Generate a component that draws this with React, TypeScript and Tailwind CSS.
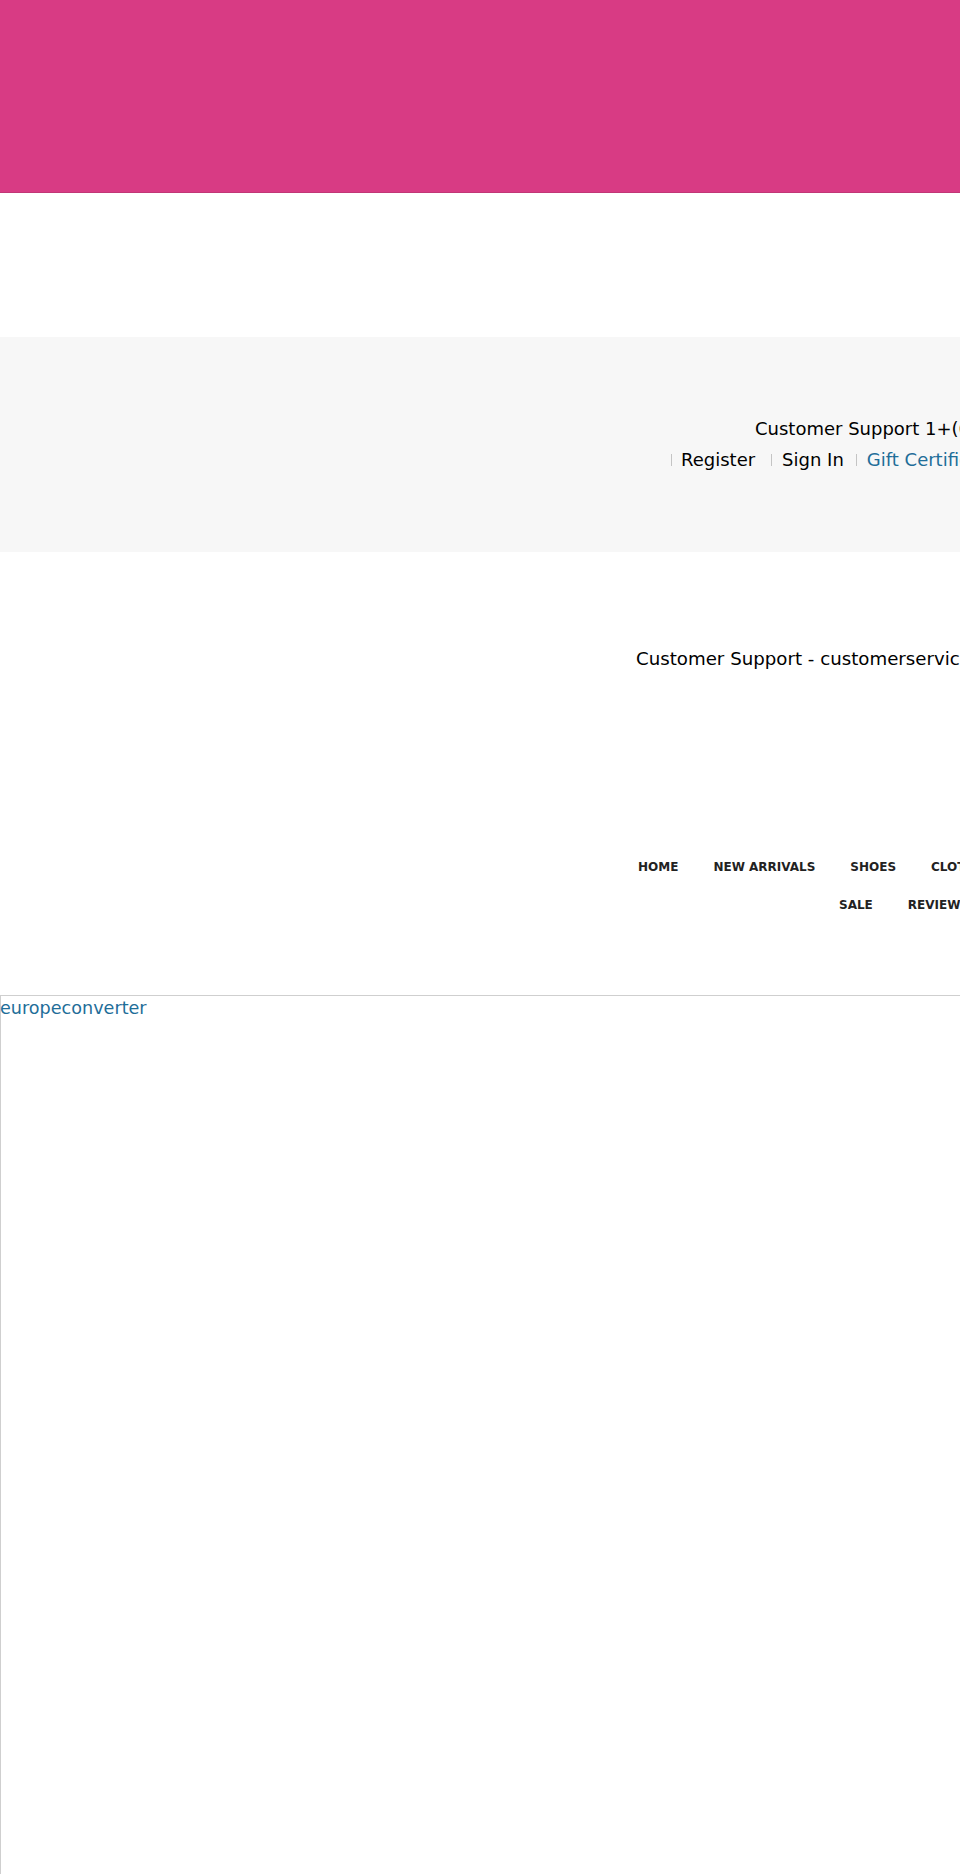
const navTop = ['HOME', 'NEW ARRIVALS', 'SHOES', 'CLOTHING', 'ACCESSORIES'];
const navBottom = ['SALE', 'REVIEWS'];

const Sep = () => <span className="block shrink-0 w-px h-[12px] bg-[#c4c4c4]" />;

export default function App() {
  return (
    <div className="w-[960px] min-h-[1875px] overflow-hidden bg-white text-black font-['DejaVu_Sans',Verdana,sans-serif]">
      <div className="h-[193px] bg-[#d83b84] border-b border-[#c13676]" />
      <div className="h-[144px]" />

      <div className="h-[215px] bg-[#f7f7f7] pt-[76px] whitespace-nowrap">
        <div className="pl-[755px] text-[18px] leading-[31px]">Customer Support 1+(646) 555-0199</div>
        <div className="pl-[671px] text-[18px] leading-[31px] flex items-center">
          <Sep />
          <a className="ml-[9px]">Register</a>
          <span className="ml-[16px] flex"><Sep /></span>
          <a className="ml-[10px]">Sign In</a>
          <span className="ml-[12px] flex"><Sep /></span>
          <a className="ml-[10px] text-[#1f6e99]">Gift Certificates</a>
        </div>
      </div>

      <div className="mt-[94px] pl-[636px] text-[18.2px] leading-[26px] whitespace-nowrap">
        Customer Support - customerservice@europeconverter.com
      </div>

      <nav className="mt-[176px] text-[12px] font-bold leading-[38px] text-[#222] whitespace-nowrap">
        <ul className="flex gap-[35px] pl-[638px]">
          {navTop.map(n => <li key={n}>{n}</li>)}
        </ul>
        <ul className="flex gap-[35px] pl-[839px]">
          {navBottom.map(n => <li key={n}>{n}</li>)}
        </ul>
      </nav>

      <div className="mt-[71px] h-[879px] border-t border-l border-[#cfcfcf]">
        <a className="block text-[17.6px] leading-[24px] text-[#1f6e99] -ml-px">europeconverter</a>
      </div>
    </div>
  );
}
